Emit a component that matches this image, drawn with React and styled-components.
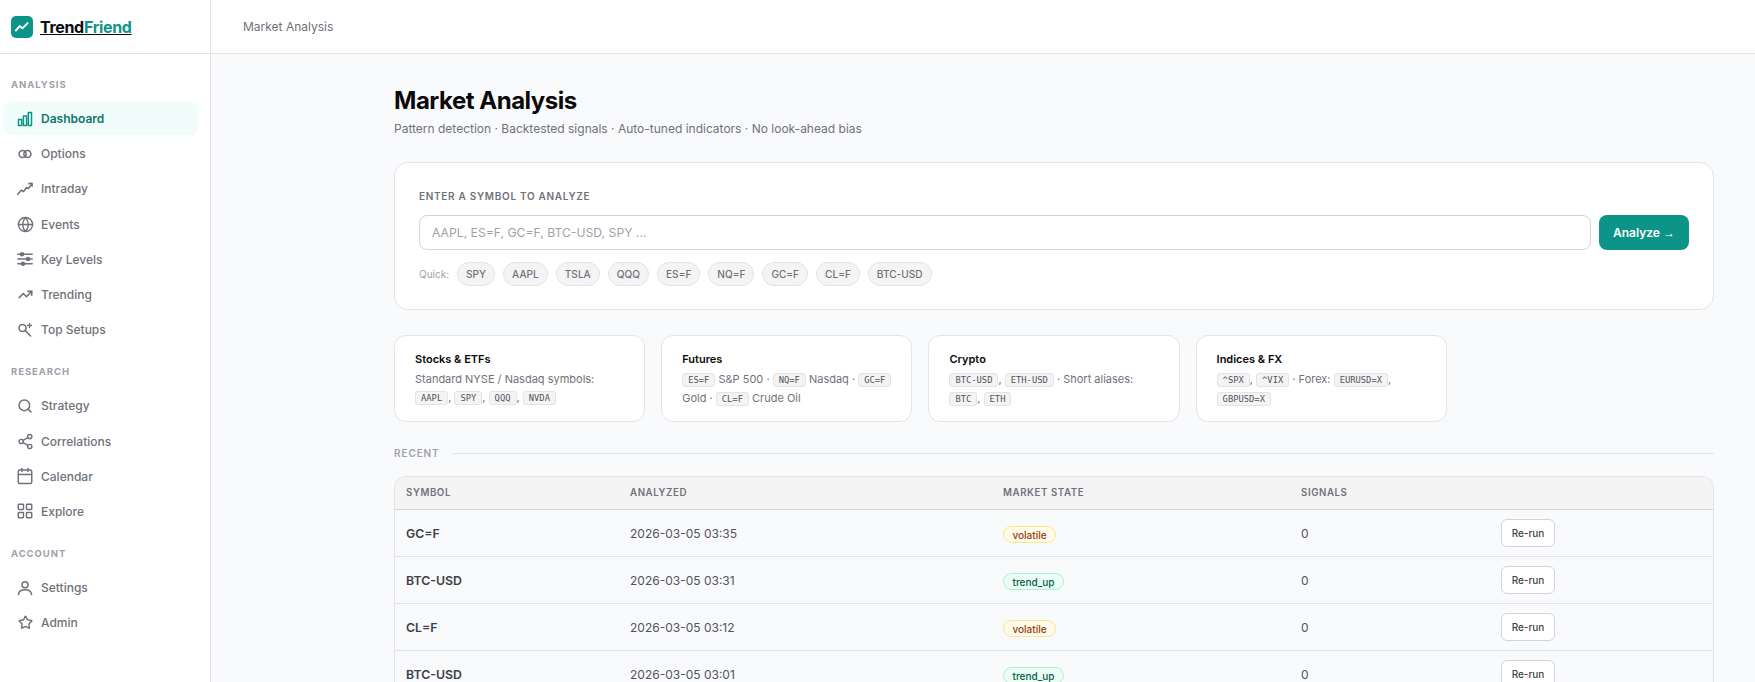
import React from "react";
import styled, { createGlobalStyle } from "styled-components";
import { Globe, Search, Share2, Calendar, LayoutGrid, Star, TrendingUp } from "lucide-react";

const GlobalStyle = createGlobalStyle`
    html, body {
        margin: 0;
        height: 100%;
        overflow: hidden;
        background: #f9fafb;
        font-family: Inter, "Noto Sans", sans-serif;
    }
    * { box-sizing: border-box; }
`;

const Shell = styled.div`
    display: grid;
    grid-template-columns: 211px 1fr;
    grid-template-rows: 54px 1fr;
    height: 682px;
    overflow: hidden;
`;

const Brand = styled.a`
    display: flex;
    align-items: center;
    gap: 7px;
    padding-left: 11px;
    background: #fff;
    border-right: 1px solid #e4e4e7;
    border-bottom: 1px solid #e4e4e7;
    color: #0a0a0a;
    font-size: 16px;
    font-weight: 700;
    letter-spacing: -0.02em;
    text-decoration: underline;
`;

const LogoMark = styled.span`
    display: flex;
    align-items: center;
    justify-content: center;
    width: 22px;
    height: 22px;
    border-radius: 5px;
    background: #0d9488;
    color: #fff;
`;

const Accent = styled.span`
    color: #0d9488;
`;

const Topbar = styled.header`
    display: flex;
    align-items: center;
    padding-left: 32px;
    background: #fff;
    border-bottom: 1px solid #e4e4e7;
    color: #71717a;
    font-size: 12px;
`;

const Sidebar = styled.aside`
    display: flex;
    flex-direction: column;
    padding: 25px 12px 0 3px;
    background: #fff;
    border-right: 1px solid #e4e4e7;
`;

const SectionLabel = styled.div`
    height: 12px;
    margin: ${p => (p.$first ? "0" : "18px")} 0 11px 8px;
    color: #a1a1aa;
    font-size: 9.5px;
    line-height: 12px;
    font-weight: 700;
    letter-spacing: 0.1em;
    text-transform: uppercase;
`;

const NavItem = styled.a`
    display: flex;
    align-items: center;
    height: 33px;
    margin-bottom: 2.2px;
    padding-left: 13px;
    border-radius: 8px;
    background: ${p => (p.$active ? "#f0fdfa" : "transparent")};
    color: ${p => (p.$active ? "#0f766e" : "#71717a")};
    font-size: 12px;
    font-weight: ${p => (p.$active ? 600 : 500)};
`;

const IconSlot = styled.span`
    display: flex;
    align-items: center;
    justify-content: center;
    flex: none;
    width: 18px;
    height: 18px;
    margin-right: 7px;
    color: ${p => (p.$active ? "#0d9488" : "#71717a")};
`;

const Main = styled.main`
    padding: 32px 41px 0 183px;
    overflow: hidden;
`;

const Title = styled.h1`
    margin: 0;
    color: #0a0a0a;
    font-size: 24px;
    line-height: 30px;
    font-weight: 700;
    letter-spacing: -0.02em;
`;

const Subtitle = styled.p`
    margin: 4px 0 0;
    color: #71717a;
    font-size: 12px;
    line-height: 18px;
`;

const SearchCard = styled.section`
    height: 148px;
    margin-top: 24px;
    padding: 26px 24px 0;
    background: #fff;
    border: 1px solid #e4e4e7;
    border-radius: 14px;
`;

const FieldLabel = styled.div`
    color: #71717a;
    font-size: 10px;
    line-height: 14px;
    font-weight: 600;
    letter-spacing: 0.07em;
    text-transform: uppercase;
`;

const InputRow = styled.div`
    display: flex;
    gap: 8px;
    margin-top: 12px;
`;

const SymbolInput = styled.input`
    flex: 1;
    height: 35px;
    padding: 0 12px;
    background: #fff;
    border: 1px solid #d4d4d8;
    border-radius: 8px;
    font-family: inherit;
    font-size: 12.2px;
    outline: none;
    &::placeholder { color: #a1a1aa; }
`;

const AnalyzeButton = styled.button`
    width: 90px;
    height: 35px;
    border: 0;
    border-radius: 8px;
    background: #0d9488;
    color: #fff;
    font-family: inherit;
    font-size: 12px;
    font-weight: 600;
`;

const ArrowGlyph = styled.span`
    font-family: "Liberation Sans", sans-serif;
`;

const QuickRow = styled.div`
    display: flex;
    align-items: center;
    gap: 8px;
    margin-top: 12px;
`;

const QuickLabel = styled.span`
    color: #a1a1aa;
    font-size: 10px;
`;

const Chip = styled.button`
    height: 24px;
    padding: 0 8px;
    background: #f4f4f5;
    border: 1px solid #e4e4e7;
    border-radius: 12px;
    color: #71717a;
    font-family: inherit;
    font-size: 10.1px;
    font-weight: 500;
`;

const InfoGrid = styled.div`
    display: grid;
    grid-template-columns: repeat(5, 1fr);
    gap: 16px;
    margin-top: 25px;
`;

const InfoCard = styled.div`
    height: 87px;
    padding: 15px 20px 0;
    background: #fff;
    border: 1px solid #e4e4e7;
    border-radius: 12px;
`;

const InfoTitle = styled.div`
    color: #0a0a0a;
    font-size: 11px;
    line-height: 16px;
    font-weight: 600;
`;

const InfoText = styled.div`
    margin-top: 3px;
    color: #71717a;
    font-size: 11px;
    line-height: 18px;
`;

const Code = styled.code`
    padding: 1px 5px;
    background: #f4f4f5;
    border: 1px solid #e4e4e7;
    border-radius: 3px;
    color: #52525b;
    font-family: "DejaVu Sans Mono", monospace;
    font-size: 8.8px;
`;

const RecentHeading = styled.div`
    display: flex;
    align-items: center;
    gap: 13px;
    margin-top: 24px;
    color: #a1a1aa;
    font-size: 10px;
    line-height: 14px;
    font-weight: 600;
    letter-spacing: 0.09em;
    &::after {
        content: "";
        flex: 1;
        height: 1px;
        background: #e4e4e7;
    }
`;

const Table = styled.div`
    margin-top: 16px;
    border: 1px solid #e4e4e7;
    border-bottom: 0;
    border-radius: 12px 12px 0 0;
    overflow: hidden;
`;

const Row = styled.div`
    display: grid;
    grid-template-columns: 224px 373px 298px 200px 1fr;
    align-items: center;
    height: ${p => (p.$head ? "33px" : "47px")};
    padding: ${p => (p.$head ? "0 0 2px 11px" : "0 0 0 11px")};
    background: ${p => (p.$head ? "#f4f4f5" : "transparent")};
    border-bottom: 1px solid ${p => (p.$head ? "#d4d4d8" : "#e4e4e7")};
`;

const HeadCell = styled.div`
    color: #71717a;
    font-size: 9.7px;
    font-weight: 600;
    letter-spacing: 0.06em;
    text-transform: uppercase;
`;

const SymbolCell = styled.div`
    color: #3f3f46;
    font-size: 12.3px;
    font-weight: 600;
`;

const Cell = styled.div`
    color: #52525b;
    font-size: 12px;
`;

const stateColors = {
    volatile: { bg: "#fffbeb", border: "#fde68a", text: "#92400e" },
    trend_up: { bg: "#ecfdf5", border: "#a7f3d0", text: "#065f46" },
};

const Badge = styled.span`
    display: inline-flex;
    align-items: center;
    height: 17px;
    padding: 0 8.5px;
    background: ${p => stateColors[p.$state].bg};
    border: 1px solid ${p => stateColors[p.$state].border};
    border-radius: 9px;
    color: ${p => stateColors[p.$state].text};
    font-size: 10px;
    font-weight: 500;
`;

const RerunButton = styled.button`
    width: 54px;
    height: 28px;
    padding: 0;
    background: #fff;
    border: 1px solid #d4d4d8;
    border-radius: 6px;
    color: #3f3f46;
    font-family: inherit;
    font-size: 10px;
    font-weight: 500;
`;

const line = { fill: "none", stroke: "currentColor", strokeLinecap: "round", strokeLinejoin: "round" };

const BarsIcon = () => (
    <svg width="16" height="16" viewBox="0 0 16 16" {...line} strokeWidth="1.5">
        <rect x="1.5" y="8.5" width="3.2" height="6" />
        <rect x="6.4" y="5" width="3.2" height="9.5" />
        <rect x="11.3" y="1.5" width="3.2" height="13" />
    </svg>
);

const RingsIcon = () => (
    <svg width="16" height="16" viewBox="0 0 16 16" {...line} strokeWidth="1.6">
        <circle cx="5.6" cy="8" r="3.5" />
        <circle cx="10.4" cy="8" r="3.5" />
    </svg>
);

const ChartLineIcon = () => (
    <svg width="16" height="16" viewBox="0 0 16 16" {...line} strokeWidth="1.6">
        <path d="M0.8 13.2 L4.2 9.2 L6.4 10.6 L9.6 6.6 L11.4 7.4 L14.6 3.4" />
        <path d="M12 2.6 L15 2.2 L15.2 5" />
    </svg>
);

const SlidersIcon = () => (
    <svg width="16" height="16" viewBox="0 0 16 16" {...line} strokeWidth="1.5">
        <path d="M0.8 3.2 H15.2 M0.8 8 H15.2 M0.8 12.8 H15.2" />
        <circle cx="5" cy="3.2" r="1.5" fill="currentColor" />
        <circle cx="11" cy="8" r="1.5" fill="currentColor" />
        <circle cx="6" cy="12.8" r="1.5" fill="currentColor" />
    </svg>
);

const KeySearchIcon = () => (
    <svg width="16" height="16" viewBox="0 0 16 16" {...line} strokeWidth="1.6">
        <circle cx="5.5" cy="6" r="3.5" />
        <path d="M8.2 8.5 L13.5 14" />
        <path d="M12.5 1.5 V5.5 M10.5 3.5 H14.5" strokeWidth="1.3" />
    </svg>
);

const PersonIcon = () => (
    <svg width="16" height="16" viewBox="0 0 16 16" {...line} strokeWidth="1.5">
        <circle cx="8" cy="4.8" r="3" />
        <path d="M1.4 14.6 C1.8 11.4 4.6 9.8 8 9.8 C11.4 9.8 14.2 11.4 14.6 14.6" />
    </svg>
);

const LogoIcon = () => (
    <svg width="14" height="14" viewBox="0 0 16 16" {...line} strokeWidth="2.2">
        <path d="M1 12 L5.5 7 L8.5 9.5 L14.5 3.5" />
    </svg>
);

const navSections = [
    {
        label: "Analysis",
        items: [
            { name: "Dashboard", icon: <BarsIcon />, active: true },
            { name: "Options", icon: <RingsIcon /> },
            { name: "Intraday", icon: <ChartLineIcon /> },
            { name: "Events", icon: <Globe size={17} strokeWidth={2} /> },
            { name: "Key Levels", icon: <SlidersIcon /> },
            { name: "Trending", icon: <TrendingUp size={15} strokeWidth={2.5} /> },
            { name: "Top Setups", icon: <KeySearchIcon /> },
        ],
    },
    {
        label: "Research",
        items: [
            { name: "Strategy", icon: <Search size={16} strokeWidth={2.2} /> },
            { name: "Correlations", icon: <Share2 size={17} strokeWidth={2} /> },
            { name: "Calendar", icon: <Calendar size={18} strokeWidth={1.9} /> },
            { name: "Explore", icon: <LayoutGrid size={18} strokeWidth={1.9} /> },
        ],
    },
    {
        label: "Account",
        items: [
            { name: "Settings", icon: <PersonIcon /> },
            { name: "Admin", icon: <Star size={15} strokeWidth={2.3} /> },
        ],
    },
];

const quickSymbols = ["SPY", "AAPL", "TSLA", "QQQ", "ES=F", "NQ=F", "GC=F", "CL=F", "BTC-USD"];

const recentRuns = [
    { symbol: "GC=F", analyzed: "2026-03-05 03:35", state: "volatile", signals: 0 },
    { symbol: "BTC-USD", analyzed: "2026-03-05 03:31", state: "trend_up", signals: 0 },
    { symbol: "CL=F", analyzed: "2026-03-05 03:12", state: "volatile", signals: 0 },
    { symbol: "BTC-USD", analyzed: "2026-03-05 03:01", state: "trend_up", signals: 0 },
];

export default function App() {
    return (
        <>
            <GlobalStyle />
            <Shell>
                <Brand>
                    <LogoMark><LogoIcon /></LogoMark>
                    <span>Trend<Accent>Friend</Accent></span>
                </Brand>
                <Topbar>Market Analysis</Topbar>
                <Sidebar>
                    {navSections.map((section, i) => (
                        <React.Fragment key={section.label}>
                            <SectionLabel $first={i === 0}>{section.label}</SectionLabel>
                            {section.items.map(item => (
                                <NavItem key={item.name} $active={item.active}>
                                    <IconSlot $active={item.active}>{item.icon}</IconSlot>
                                    {item.name}
                                </NavItem>
                            ))}
                        </React.Fragment>
                    ))}
                </Sidebar>
                <Main>
                    <Title>Market Analysis</Title>
                    <Subtitle>Pattern detection · Backtested signals · Auto-tuned indicators · No look-ahead bias</Subtitle>

                    <SearchCard>
                        <FieldLabel>Enter a symbol to analyze</FieldLabel>
                        <InputRow>
                            <SymbolInput placeholder="AAPL, ES=F, GC=F, BTC-USD, SPY ..." />
                            <AnalyzeButton>Analyze <ArrowGlyph>→</ArrowGlyph></AnalyzeButton>
                        </InputRow>
                        <QuickRow>
                            <QuickLabel>Quick:</QuickLabel>
                            {quickSymbols.map(s => <Chip key={s}>{s}</Chip>)}
                        </QuickRow>
                    </SearchCard>

                    <InfoGrid>
                        <InfoCard>
                            <InfoTitle>Stocks &amp; ETFs</InfoTitle>
                            <InfoText>
                                Standard NYSE / Nasdaq symbols: <Code>AAPL</Code>, <Code>SPY</Code>, <Code>QQQ</Code>, <Code>NVDA</Code>
                            </InfoText>
                        </InfoCard>
                        <InfoCard>
                            <InfoTitle>Futures</InfoTitle>
                            <InfoText>
                                <Code>ES=F</Code> S&amp;P 500 · <Code>NQ=F</Code> Nasdaq · <Code>GC=F</Code> Gold · <Code>CL=F</Code> Crude Oil
                            </InfoText>
                        </InfoCard>
                        <InfoCard>
                            <InfoTitle>Crypto</InfoTitle>
                            <InfoText>
                                <Code>BTC-USD</Code>, <Code>ETH-USD</Code> · Short aliases: <Code>BTC</Code>, <Code>ETH</Code>
                            </InfoText>
                        </InfoCard>
                        <InfoCard>
                            <InfoTitle>Indices &amp; FX</InfoTitle>
                            <InfoText>
                                <Code>^SPX</Code>, <Code>^VIX</Code> · Forex: <Code>EURUSD=X</Code>, <Code>GBPUSD=X</Code>
                            </InfoText>
                        </InfoCard>
                    </InfoGrid>

                    <RecentHeading>RECENT</RecentHeading>

                    <Table>
                        <Row $head>
                            <HeadCell>Symbol</HeadCell>
                            <HeadCell>Analyzed</HeadCell>
                            <HeadCell>Market State</HeadCell>
                            <HeadCell>Signals</HeadCell>
                            <HeadCell />
                        </Row>
                        {recentRuns.map(run => (
                            <Row key={run.analyzed}>
                                <SymbolCell>{run.symbol}</SymbolCell>
                                <Cell>{run.analyzed}</Cell>
                                <div><Badge $state={run.state}>{run.state}</Badge></div>
                                <Cell>{run.signals}</Cell>
                                <div><RerunButton>Re-run</RerunButton></div>
                            </Row>
                        ))}
                    </Table>
                </Main>
            </Shell>
        </>
    );
}
